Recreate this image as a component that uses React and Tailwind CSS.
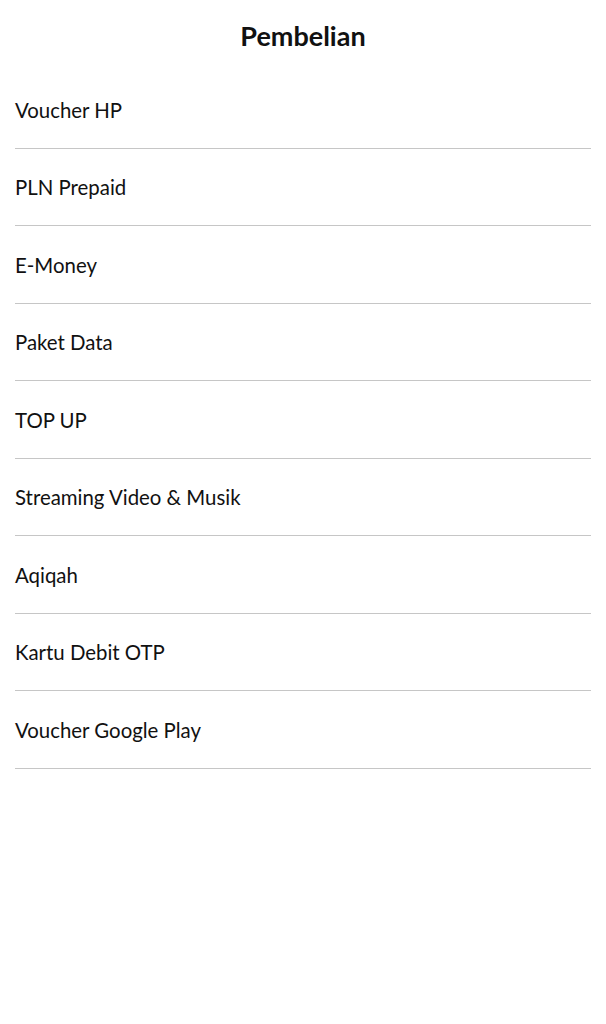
const items = [
  'Voucher HP',
  'PLN Prepaid',
  'E-Money',
  'Paket Data',
  'TOP UP',
  'Streaming Video & Musik',
  'Aqiqah',
  'Kartu Debit OTP',
  'Voucher Google Play',
];

export default function App() {
  return (
    <div className="min-h-screen bg-white text-[#111] font-['Lato','Liberation_Sans',sans-serif]">
      <div className="h-[71px] flex items-center justify-center pt-[1px]">
        <h1 className="text-[27px] font-bold">Pembelian</h1>
      </div>
      <div className="mx-[15px]">
        {items.map(item => (
          <div key={item} className="h-[77.5px] flex items-center pt-[2px] border-b-[1.5px] border-[#c6c6c6]">
            <span className="text-[20.4px]">{item}</span>
          </div>
        ))}
      </div>
    </div>
  );
}
